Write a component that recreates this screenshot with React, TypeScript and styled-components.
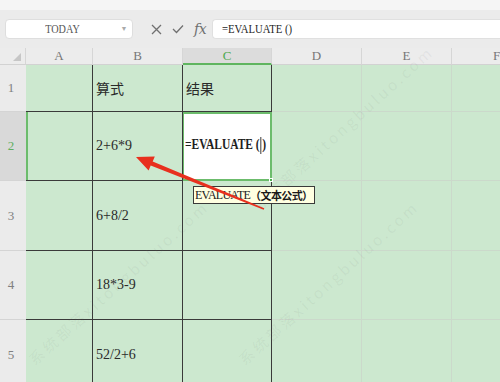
import React from "react";
import styled, { createGlobalStyle } from "styled-components";

const GlobalStyle = createGlobalStyle`
  html, body { margin: 0; padding: 0; background: #ffffff; }
  * { box-sizing: border-box; }
`;

const SERIF = `"Liberation Serif", "Noto Sans CJK SC", serif`;
const CJK = `"Liberation Serif", "Noto Sans CJK SC", sans-serif`;

const Page = styled.div`
  position: relative;
  width: 500px;
  height: 382px;
  overflow: hidden;
  background: #ebebeb;
  font-family: ${SERIF};
`;

const TopStrip = styled.div`
  height: 10px;
  background: #f5f5f5;
`;

const Toolbar = styled.div`
  height: 38px;
  display: flex;
  align-items: center;
  padding-left: 5px;
  background: #ebebeb;
`;

const NameBox = styled.div`
  width: 128px;
  height: 20px;
  background: #ffffff;
  border: 1px solid #dedede;
  border-radius: 4px;
  display: flex;
  align-items: center;
  position: relative;
`;

const NameText = styled.span`
  flex: 1;
  text-align: center;
  font-size: 12px;
  color: #555;
  display: inline-block;
  transform: scaleX(0.85);
`;

const Caret = styled.span`
  width: 10px;
  margin-right: 3px;
  font-size: 7px;
  color: #aaa;
  text-align: center;
`;

const Icons = styled.div`
  display: flex;
  align-items: center;
  gap: 10px;
  margin-left: 18px;
  margin-right: 6px;
  color: #707070;
`;

const FxText = styled.span`
  font-family: "DejaVu Serif", serif;
  font-style: italic;
  font-size: 14px;
  color: #707070;
  letter-spacing: -0.5px;
`;

const FormulaInput = styled.div`
  flex: 1;
  height: 20px;
  background: #ffffff;
  border: 1px solid #e0e0e0;
  border-right: none;
  border-radius: 4px 0 0 4px;
  display: flex;
  align-items: center;
  padding-left: 9px;
`;

const Condensed = styled.span<{ $size: number; $bold?: boolean }>`
  display: inline-block;
  font-family: ${SERIF};
  font-size: ${(p) => p.$size}px;
  font-weight: ${(p) => (p.$bold ? 700 : 400)};
  color: #1e1e1e;
  transform: scaleX(0.82);
  transform-origin: left center;
  white-space: nowrap;
`;

const Sheet = styled.div`
  display: grid;
  grid-template-columns: 26px 67px 90px 89px 90px 90px 90px;
  grid-template-rows: 17px 47px 69px 70px 69px 70px;
`;

const Corner = styled.div`
  background: #ececec;
  border-bottom: 1px solid #d2d2d2;
  border-right: 1px solid #d6d6d6;
  position: relative;
  &::after {
    content: "";
    position: absolute;
    right: 4px;
    bottom: 3px;
    width: 0;
    height: 0;
    border-left: 8px solid transparent;
    border-bottom: 8px solid #c6c6c6;
  }
`;

const ColHeader = styled.div<{ $active?: boolean }>`
  background: ${(p) => (p.$active ? "#dcdcdc" : "#ececec")};
  border-right: 1px solid #d6d6d6;
  border-bottom: ${(p) => (p.$active ? "2px solid #5fb55f" : "1px solid #d2d2d2")};
  color: ${(p) => (p.$active ? "#4fa94f" : "#777")};
  font-size: 13px;
  display: flex;
  align-items: center;
  justify-content: center;
  padding-top: ${(p) => (p.$active ? "1px" : "0")};
`;

const RowHeader = styled.div<{ $active?: boolean }>`
  background: ${(p) => (p.$active ? "#d9d9d9" : "#ebebeb")};
  border-bottom: 1px solid #d4d4d4;
  color: ${(p) => (p.$active ? "#5fae5f" : "#808080")};
  font-size: 13px;
  display: flex;
  align-items: center;
  justify-content: center;
  padding-right: 4px;
`;

const Cell = styled.div<{ $dark?: boolean; $selLeft?: boolean }>`
  background: #cce8cf;
  border-right: 1px solid ${(p) => (p.$dark ? "#3a3a3a" : "#cbd9cb")};
  border-bottom: 1px solid ${(p) => (p.$dark ? "#3a3a3a" : "#cbd9cb")};
  box-shadow: ${(p) => (p.$selLeft ? "inset 2px 0 0 #6cbc6c" : "none")};
  display: flex;
  align-items: center;
  padding-left: 3px;
  font-family: ${CJK};
  font-size: 14px;
  color: #2a2a2a;
  white-space: nowrap;
`;

const ActiveCell = styled.div`
  position: relative;
  background: #ffffff;
  border: 2px solid #6cbc6c;
  border-left-width: 1px;
  display: flex;
  align-items: center;
  padding-left: 1px;
  padding-bottom: 2px;
`;

const FillHandle = styled.span`
  position: absolute;
  right: -3px;
  bottom: -3px;
  width: 4px;
  height: 4px;
  background: #4caf50;
  border: 1px solid #ffffff;
`;

const Cursor = styled.span`
  display: inline-block;
  width: 1px;
  height: 17px;
  background: #111;
  vertical-align: middle;
  margin: 0 1px;
`;

const Tooltip = styled.div`
  position: absolute;
  left: 193px;
  top: 186px;
  height: 18px;
  padding: 0 1px 0 1px;
  background: #ffffe1;
  border: 1px solid #3a3a3a;
  display: flex;
  align-items: center;
  white-space: nowrap;
`;

const TipLatin = styled.span`
  font-family: ${SERIF};
  font-size: 12px;
  letter-spacing: -0.75px;
  color: #1a1a1a;
`;

const TipCjk = styled.span`
  font-family: "Noto Sans CJK SC", sans-serif;
  font-size: 11px;
  font-weight: 700;
  color: #1a1a1a;
  letter-spacing: -0.6px;
`;

const Overlay = styled.svg`
  position: absolute;
  left: 0;
  top: 0;
  pointer-events: none;
`;

const Watermark = styled.div<{ $x: number; $y: number }>`
  position: absolute;
  left: ${(p) => p.$x}px;
  top: ${(p) => p.$y}px;
  transform: rotate(-42deg);
  transform-origin: left top;
  font-family: "Noto Sans CJK SC", sans-serif;
  font-size: 15px;
  line-height: 18px;
  letter-spacing: 3px;
  color: rgba(120, 120, 120, 0.09);
  white-space: nowrap;
  pointer-events: none;
`;

const marks = [
  { x: 25, y: 355 },
  { x: 235, y: 355 },
  { x: 250, y: 200 },
];

const cols = ["A", "B", "C", "D", "E", "F"];

const rows: { n: number; b: string; c?: string }[] = [
  { n: 1, b: "算式", c: "结果" },
  { n: 2, b: "2+6*9" },
  { n: 3, b: "6+8/2" },
  { n: 4, b: "18*3-9" },
  { n: 5, b: "52/2+6" },
];

export default function App() {
  return (
    <>
      <GlobalStyle />
      <Page>
        <TopStrip />
        <Toolbar>
          <NameBox>
            <NameText>TODAY</NameText>
            <Caret>▼</Caret>
          </NameBox>
          <Icons>
            <svg width="11" height="11" viewBox="0 0 11 11">
              <path d="M1 1 L10 10 M10 1 L1 10" stroke="#707070" strokeWidth="1.3" fill="none" />
            </svg>
            <svg width="12" height="10" viewBox="0 0 12 10">
              <path d="M1 5 L4.5 8.5 L11 1.5" stroke="#707070" strokeWidth="1.3" fill="none" />
            </svg>
            <FxText>fx</FxText>
          </Icons>
          <FormulaInput>
            <Condensed $size={13}>=EVALUATE ()</Condensed>
          </FormulaInput>
        </Toolbar>
        <Sheet>
          <Corner />
          {cols.map((c) => (
            <ColHeader key={c} $active={c === "C"}>
              {c}
            </ColHeader>
          ))}
          {rows.map((r) => (
            <React.Fragment key={r.n}>
              <RowHeader $active={r.n === 2}>{r.n}</RowHeader>
              <Cell $dark $selLeft={r.n === 2} />
              <Cell $dark>{r.b}</Cell>
              {r.n === 2 ? (
                <ActiveCell>
                  <Condensed $size={14} $bold>
                    =EVALUATE (<Cursor />)
                  </Condensed>
                  <FillHandle />
                </ActiveCell>
              ) : (
                <Cell $dark>{r.c}</Cell>
              )}
              <Cell />
              <Cell />
              <Cell />
            </React.Fragment>
          ))}
        </Sheet>
        {marks.map((m, i) => (
          <Watermark key={i} $x={m.x} $y={m.y}>
            系统部落xitongbuluo.com
          </Watermark>
        ))}
        <Tooltip>
          <TipLatin>EVALUATE</TipLatin>
          <TipCjk>（文本公式）</TipCjk>
        </Tooltip>
        <Overlay width="500" height="382" viewBox="0 0 500 382">
          <polygon
            points="136,157 154.8,156.4 152.7,161.6 264.3,208.3 263.7,209.7 150.7,165.6 148.6,170.4"
            fill="#e8301e"
          />
        </Overlay>
      </Page>
    </>
  );
}
